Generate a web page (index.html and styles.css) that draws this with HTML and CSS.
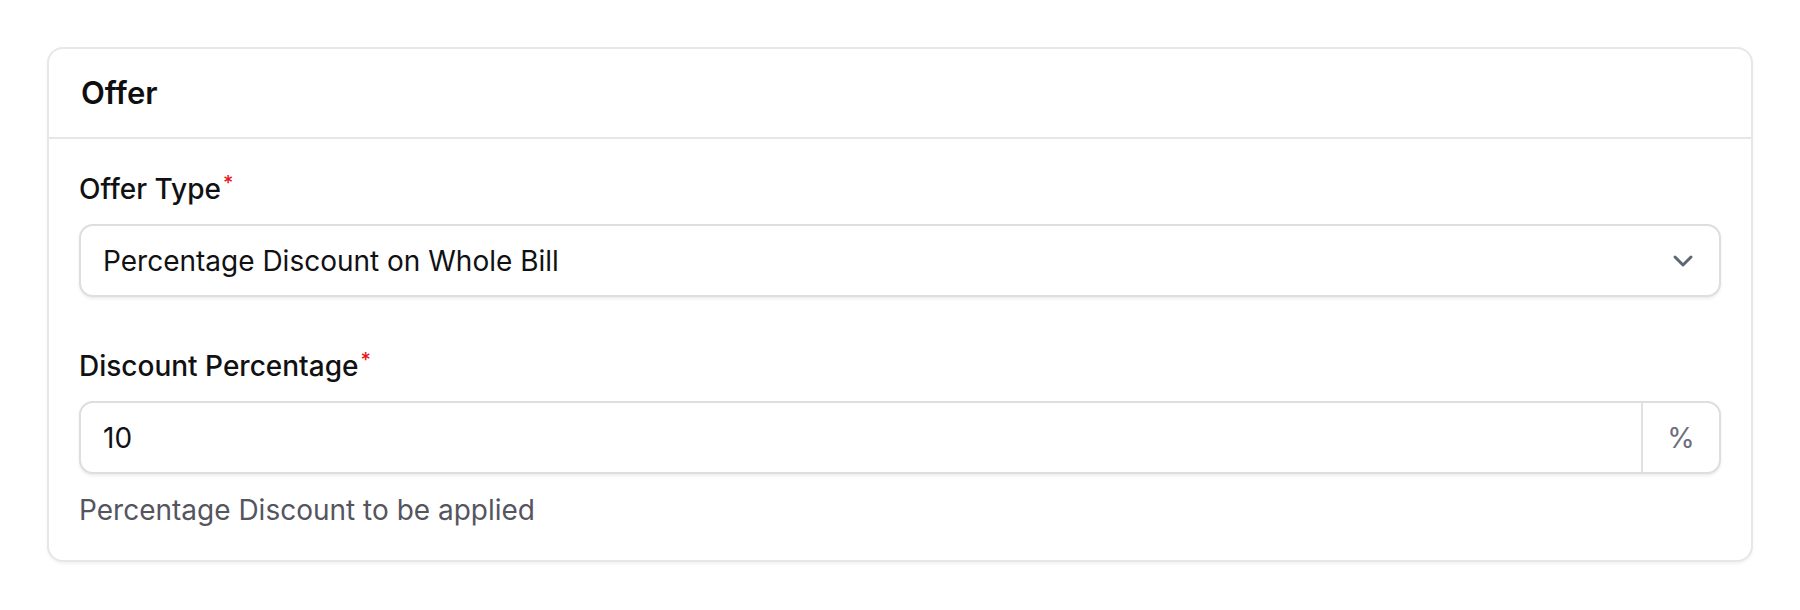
FILE: index.html
```html
<!DOCTYPE html>
<html>
<head>
<meta charset="utf-8">
<link rel="stylesheet" href="styles.css">
</head>
<body>
<div class="page">
  <section class="card">
    <header class="card-header">
      <h2 class="card-title">Offer</h2>
    </header>
    <div class="card-body">
      <div class="field">
        <label class="label">Offer Type<span class="req">*</span></label>
        <div class="select">
          <span class="select-value">Percentage Discount on Whole Bill</span>
          <svg class="chevron" viewBox="0 0 24 24" fill="none" stroke="currentColor" stroke-width="2.25" stroke-linecap="round" stroke-linejoin="round"><path d="m6 9 6 6 6-6"/></svg>
        </div>
      </div>
      <div class="field">
        <label class="label">Discount Percentage<span class="req">*</span></label>
        <div class="input-group">
          <span class="input-value">10</span>
          <span class="addon">%</span>
        </div>
        <p class="help">Percentage Discount to be applied</p>
      </div>
    </div>
  </section>
</div>
</body>
</html>
```
FILE: styles.css
```css
* { box-sizing: border-box; }
html, body { margin: 0; padding: 0; background: #ffffff; }
body { font-family: Inter, "Noto Sans", sans-serif; color: #111113; }
.page { padding: 47px; }
.card {
  border: 2px solid #e7e7e9;
  border-radius: 16px;
  background: #fff;
  box-shadow: 0 2px 3px rgba(0,0,0,0.05);
}
.card-header {
  padding: 24px 32px;
  border-bottom: 2px solid #e6e6e8;
}
.card-title {
  margin: 0;
  font-size: 31px;
  line-height: 40px;
  font-weight: 600;
  color: #0f0f10;
}
.card-body {
  padding: 32px 30px;
  display: flex;
  flex-direction: column;
  gap: 51px;
}
.field { display: flex; flex-direction: column; }
.label {
  font-size: 28px;
  line-height: 36px;
  font-weight: 500;
  color: #111113;
  margin-bottom: 17px;
}
.req {
  color: #e8141a;
  font-size: 20px;
  vertical-align: top;
  position: relative;
  top: -6px;
  margin-left: 2px;
}
.select, .input-group {
  height: 73px;
  border: 2px solid #dedee1;
  border-radius: 14px;
  background: #fff;
  box-shadow: 0 2px 3px rgba(0,0,0,0.07);
  display: flex;
  align-items: center;
}
.select { padding: 0 20px 0 22px; }
.select-value, .input-value {
  flex: 1;
  font-size: 28px;
  color: #111113;
}
.input-value { padding-left: 22px; }
.chevron { width: 32px; height: 32px; color: #5e6573; }
.addon {
  width: 78px;
  align-self: stretch;
  border-left: 2px solid #e1e1e4;
  display: flex;
  align-items: center;
  justify-content: center;
  font-size: 28px;
  color: #6e6e7a;
}
.help {
  margin: 18px 0 0;
  font-size: 28px;
  line-height: 36px;
  color: #55555f;
}
```
